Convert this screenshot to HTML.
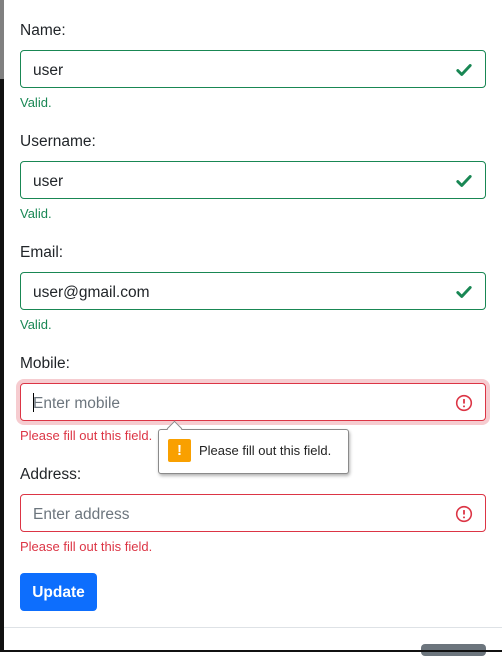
<!DOCTYPE html>
<html><head><meta charset="utf-8"><style>
*{box-sizing:border-box;margin:0;padding:0}
body{width:502px;height:652px;background:#fff;position:relative;overflow:hidden;font-family:"Segoe UI","Liberation Sans","DejaVu Sans",sans-serif;color:#212529}
.strip{position:absolute;left:0;top:0;width:4px;height:652px;background:#111}
.strip .g{position:absolute;left:0;top:0;width:4px;height:79px;background:#808080}
.lbl{position:absolute;left:20px;font-size:15.5px;color:#212529}
.in{position:absolute;left:20px;width:466px;height:38px;border:1px solid #198754;border-radius:4px;font-size:15.5px;padding-left:12px;line-height:39px}
.in.bad{border-color:#dc3545}
.fb{position:absolute;left:20px;font-size:13px}
.ok{color:#198754}.er{color:#dc3545}
.ph{color:#6c757d}
svg.ic{position:absolute;right:12px;top:10px}
</style></head><body>
<div class="strip"><div class="g"></div></div>

<div class="lbl" style="top:22px">Name:</div>
<div class="in" style="top:50px">user<svg class="ic" width="18" height="18" viewBox="0 0 16 16"><path d="M2.5 8.5l3.5 3.5 7.5-8" stroke="#198754" stroke-width="2.6" fill="none" stroke-linecap="round" stroke-linejoin="round"/></svg></div>
<div class="fb ok" style="top:95px">Valid.</div>

<div class="lbl" style="top:133px">Username:</div>
<div class="in" style="top:161px">user<svg class="ic" width="18" height="18" viewBox="0 0 16 16"><path d="M2.5 8.5l3.5 3.5 7.5-8" stroke="#198754" stroke-width="2.6" fill="none" stroke-linecap="round" stroke-linejoin="round"/></svg></div>
<div class="fb ok" style="top:206px">Valid.</div>

<div class="lbl" style="top:244px">Email:</div>
<div class="in" style="top:272px">user@gmail.com<svg class="ic" width="18" height="18" viewBox="0 0 16 16"><path d="M2.5 8.5l3.5 3.5 7.5-8" stroke="#198754" stroke-width="2.6" fill="none" stroke-linecap="round" stroke-linejoin="round"/></svg></div>
<div class="fb ok" style="top:317px">Valid.</div>

<div class="lbl" style="top:355px">Mobile:</div>
<div class="in bad" style="top:383px;box-shadow:0 0 0 4px rgba(220,53,69,.25)"><span style="position:absolute;left:12px;top:9px;width:1px;height:19px;background:#000"></span><span class="ph">Enter mobile</span><svg class="ic" width="18" height="18" viewBox="0 0 16 16"><circle cx="8" cy="8" r="6.5" stroke="#dc3545" stroke-width="1.4" fill="none"/><path d="M8 4.5v4" stroke="#dc3545" stroke-width="1.6"/><circle cx="8" cy="11" r=".9" fill="#dc3545"/></svg></div>
<div class="fb er" style="top:428px">Please fill out this field.</div>

<div class="lbl" style="top:466px">Address:</div>
<div class="in bad" style="top:494px"><span class="ph">Enter address</span><svg class="ic" width="18" height="18" viewBox="0 0 16 16"><circle cx="8" cy="8" r="6.5" stroke="#dc3545" stroke-width="1.4" fill="none"/><path d="M8 4.5v4" stroke="#dc3545" stroke-width="1.6"/><circle cx="8" cy="11" r=".9" fill="#dc3545"/></svg></div>
<div class="fb er" style="top:539px">Please fill out this field.</div>

<div style="position:absolute;left:158px;top:429px;width:191px;height:45px;background:#fff;border:1px solid #8a8a8a;border-radius:3px;box-shadow:1px 2px 3px rgba(0,0,0,.3)">
 <div style="position:absolute;left:9px;top:9px;width:23px;height:23px;background:#f9a000;border-radius:2px;color:#fff;font-weight:bold;text-align:center;line-height:23px;font-size:15px">!</div>
 <div style="position:absolute;left:40px;top:13px;font-size:13px;color:#222">Please fill out this field.</div>
</div>
<div style="position:absolute;left:169px;top:423px;width:11px;height:11px;background:#fff;border-left:1px solid #8a8a8a;border-top:1px solid #8a8a8a;transform:rotate(45deg)"></div>

<div style="position:absolute;left:20px;top:573px;width:77px;height:38px;background:#0d6efd;border-radius:4px;color:#fff;font-size:15.5px;font-weight:600;text-align:center;line-height:39px">Update</div>
<div style="position:absolute;left:4px;top:627px;width:498px;height:1px;background:#dee2e6"></div>
<div style="position:absolute;left:421px;top:644px;width:65px;height:12px;background:#6c757d;border-radius:4px"></div>
<div style="position:absolute;left:0;top:650px;width:502px;height:2px;background:#111"></div>
</body></html>
